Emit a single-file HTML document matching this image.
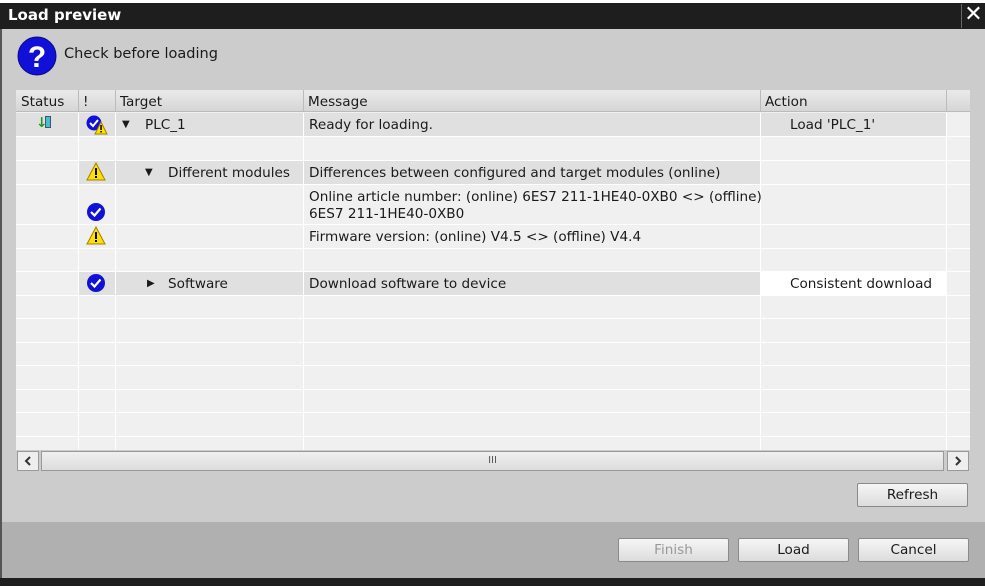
<!DOCTYPE html><html><head><style>
*{margin:0;padding:0;box-sizing:border-box}
body{width:985px;height:588px;overflow:hidden;background:#fff;font-family:"DejaVu Sans","Liberation Sans",sans-serif;font-size:13.6px;color:#1a1a1a;position:relative}
.a{position:absolute}
.t{position:absolute;white-space:nowrap;font-size:13.6px}
.btn{position:absolute;height:24px;width:111px;border:1px solid #8a8a8a;border-radius:2px;background:linear-gradient(#f6f6f6,#dcdcdc);text-align:center;line-height:22px;font-size:13.6px}
.hl{position:absolute;height:1px;background:#fff;left:16px;width:954px}
.vl{position:absolute;width:1px;background:#fff;top:113px;height:337px}
</style></head><body>
<div class="a" style="left:0;top:3px;width:985px;height:26px;background:#1e1e1e"></div>
<div class="t" style="left:8px;top:6px;color:#fff;font-weight:bold;font-size:15px">Load preview</div>
<div class="a" style="left:961px;top:4px;width:24px;height:24px;border-left:1px solid #666;color:#fff;font-size:22px;line-height:22px;text-align:center">✕</div>
<div class="a" style="left:0;top:29px;width:985px;height:493px;background:#cccccc;border-left:2px solid #555"></div>
<div class="a" style="left:0;top:522px;width:985px;height:56px;background:#b0b0b0;border-left:2px solid #555"></div>
<div class="a" style="left:0;top:578px;width:985px;height:8px;background:#1e1e1e"></div>
<svg class="a" style="left:17px;top:36px" width="40" height="40"><circle cx="20" cy="20" r="19" fill="#1010d8" stroke="#0a0a80"/><text x="20" y="31" text-anchor="middle" fill="#fff" font-size="30" font-weight="bold" font-family="Liberation Sans">?</text></svg>
<div class="t" style="left:64px;top:46px;font-size:14.5px">Check before loading</div>
<div class="a" style="left:16px;top:90px;width:954px;height:360px;background:#f0f0f0"></div>
<div class="a" style="left:16px;top:90px;width:954px;height:22px;background:linear-gradient(#eaeaea,#d6d6d6);border-bottom:1px solid #bbb"></div>
<div class="a" style="left:78px;top:90px;width:1px;height:22px;background:#bbb"></div>
<div class="a" style="left:115px;top:90px;width:1px;height:22px;background:#bbb"></div>
<div class="a" style="left:303px;top:90px;width:1px;height:22px;background:#bbb"></div>
<div class="a" style="left:760px;top:90px;width:1px;height:22px;background:#bbb"></div>
<div class="a" style="left:946px;top:90px;width:1px;height:22px;background:#bbb"></div>
<div class="t" style="left:21px;top:94px">Status</div><div class="t" style="left:83px;top:94px">!</div><div class="t" style="left:120px;top:94px">Target</div><div class="t" style="left:308px;top:94px">Message</div><div class="t" style="left:765px;top:94px">Action</div>
<div class="a" style="left:16px;top:113px;width:930px;height:23px;background:#e0e0e0"></div>
<div class="a" style="left:78px;top:161px;width:682px;height:23px;background:#e0e0e0"></div>
<div class="a" style="left:78px;top:272px;width:682px;height:23px;background:#e0e0e0"></div>
<div class="a" style="left:760px;top:272px;width:186px;height:23px;background:#fff"></div>
<div class="hl" style="top:136px"></div><div class="hl" style="top:160px"></div><div class="hl" style="top:184px"></div><div class="hl" style="top:224px"></div><div class="hl" style="top:248px"></div><div class="hl" style="top:271px"></div><div class="hl" style="top:295px"></div><div class="hl" style="top:318px"></div><div class="hl" style="top:342px"></div><div class="hl" style="top:365px"></div><div class="hl" style="top:389px"></div><div class="hl" style="top:412px"></div><div class="hl" style="top:436px"></div>
<div class="vl" style="left:78px"></div><div class="vl" style="left:115px"></div><div class="vl" style="left:303px"></div><div class="vl" style="left:760px"></div><div class="vl" style="left:946px"></div>
<div class="t" style="left:36px;top:115px;color:#1a9a1a;font-weight:bold">↓</div><div class="a" style="left:45px;top:116px;width:6px;height:12px;background:#40c0d0;border:1px solid #456"></div>
<svg class="a" style="left:86px;top:115px" width="22" height="20"><circle cx="8" cy="8" r="7.5" fill="#1010d8"/><path d="M4 8l3 3 5-6" stroke="#fff" stroke-width="2" fill="none"/><path d="M15 7l6 12h-12z" fill="#ffe000" stroke="#a08000"/><rect x="14.3" y="10" width="1.5" height="5" fill="#000"/><rect x="14.3" y="16" width="1.5" height="1.5" fill="#000"/></svg>
<div class="t" style="left:122px;top:119px;font-size:10px">▼</div><div class="t" style="left:145px;top:117px">PLC_1</div>
<div class="t" style="left:309px;top:117px">Ready for loading.</div><div class="t" style="left:790px;top:117px">Load 'PLC_1'</div>
<svg class="a" style="left:86px;top:162px" width="20" height="19"><path d="M10 1l9 17h-18z" fill="#ffe000" stroke="#a08000"/><rect x="9" y="6" width="2" height="7" fill="#000"/><rect x="9" y="14" width="2" height="2" fill="#000"/></svg>
<div class="t" style="left:145px;top:167px;font-size:10px">▼</div><div class="t" style="left:168px;top:165px">Different modules</div>
<div class="t" style="left:309px;top:165px">Differences between configured and target modules (online)</div>
<svg class="a" style="left:86px;top:202px" width="20" height="20"><circle cx="10" cy="10" r="9" fill="#1010d8"/><path d="M5 10l3.5 3.5 6-7" stroke="#fff" stroke-width="2.2" fill="none"/></svg>
<div class="t" style="left:309px;top:189px">Online article number: (online) 6ES7 211-1HE40-0XB0 &lt;&gt; (offline)</div>
<div class="t" style="left:309px;top:206px">6ES7 211-1HE40-0XB0</div>
<svg class="a" style="left:86px;top:226px" width="20" height="19"><path d="M10 1l9 17h-18z" fill="#ffe000" stroke="#a08000"/><rect x="9" y="6" width="2" height="7" fill="#000"/><rect x="9" y="14" width="2" height="2" fill="#000"/></svg>
<div class="t" style="left:309px;top:229px">Firmware version: (online) V4.5 &lt;&gt; (offline) V4.4</div>
<svg class="a" style="left:86px;top:273px" width="20" height="20"><circle cx="10" cy="10" r="9" fill="#1010d8"/><path d="M5 10l3.5 3.5 6-7" stroke="#fff" stroke-width="2.2" fill="none"/></svg>
<div class="t" style="left:147px;top:278px;font-size:10px">▶</div><div class="t" style="left:168px;top:276px">Software</div>
<div class="t" style="left:309px;top:276px">Download software to device</div><div class="t" style="left:790px;top:276px">Consistent download</div>
<div class="a" style="left:16px;top:450px;width:954px;height:22px;background:#cccccc"></div>
<div class="a" style="left:17px;top:451px;width:22px;height:20px;border:1px solid #999;background:#eee"></div>
<svg class="a" style="left:17px;top:451px" width="22" height="20"><path d="M13 6l-4 4 4 4" stroke="#333" stroke-width="2" fill="none"/></svg>
<div class="a" style="left:41px;top:451px;width:903px;height:20px;border:1px solid #999;background:linear-gradient(#f0f0f0,#dcdcdc);text-align:center;line-height:18px;font-size:10px;color:#555">III</div>
<div class="a" style="left:947px;top:451px;width:22px;height:20px;border:1px solid #999;background:#eee"></div>
<svg class="a" style="left:947px;top:451px" width="22" height="20"><path d="M9 6l4 4-4 4" stroke="#333" stroke-width="2" fill="none"/></svg>
<div class="btn" style="left:857px;top:483px">Refresh</div>
<div class="btn" style="left:618px;top:538px;color:#999">Finish</div>
<div class="btn" style="left:738px;top:538px">Load</div>
<div class="btn" style="left:858px;top:538px">Cancel</div>
</body></html>
